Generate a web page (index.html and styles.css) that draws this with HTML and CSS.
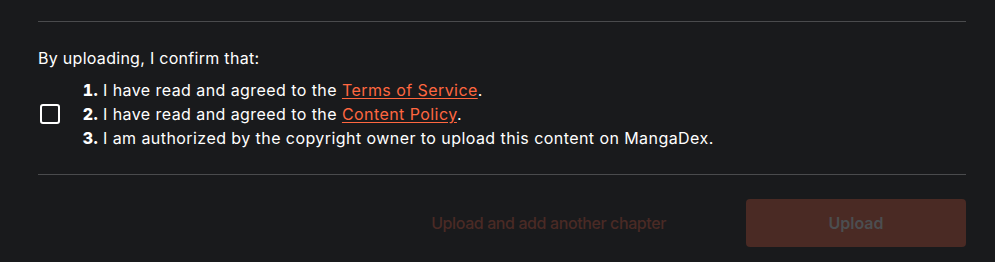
FILE: index.html
```html
<!DOCTYPE html>
<html>
<head>
<meta charset="utf-8">
<link rel="stylesheet" href="styles.css">
</head>
<body>
<div class="page">
  <hr class="divider">
  <section class="confirm">
    <p class="confirm-title">By uploading, I confirm that:</p>
    <div class="confirm-row">
      <label class="checkbox"><span class="box"></span></label>
      <ol class="terms">
        <li>I have read and agreed to the <a href="#">Terms of Service</a>.</li>
        <li>I have read and agreed to the <a href="#">Content Policy</a>.</li>
        <li>I am authorized by the copyright owner to upload this content on MangaDex.</li>
      </ol>
    </div>
  </section>
  <hr class="divider">
  <div class="actions">
    <button class="btn-text" disabled>Upload and add another chapter</button>
    <button class="btn-primary" disabled>Upload</button>
  </div>
</div>
</body>
</html>
```
FILE: styles.css
```css
html, body {
  margin: 0;
  padding: 0;
  background: #191a1c;
}
body {
  font-family: "Inter", "Noto Sans", sans-serif;
  font-size: 16px;
  line-height: 24px;
  color: #ffffff;
  letter-spacing: 0.018em;
}
.page {
  padding: 21px 29px 0 38px;
}
.divider {
  margin: 0;
  border: 0;
  height: 1px;
  background: #4a4b4d;
}
.confirm {
  padding: 24px 0;
}
.confirm-title {
  margin: 0 0 8px 0;
}
.confirm-row {
  display: flex;
  align-items: center;
}
.checkbox {
  display: flex;
  padding-left: 2px;
}
.box {
  width: 16px;
  height: 16px;
  border: 2px solid #ffffff;
  border-radius: 3px;
}
.terms {
  margin: 0;
  padding-left: 43px;
  list-style: decimal;
  letter-spacing: 0.027em;
}
.terms li::marker {
  font-weight: 800;
}
.terms a {
  color: #ff6740;
  text-decoration: underline;
  text-underline-offset: 2px;
}
.actions {
  display: flex;
  justify-content: flex-end;
  align-items: center;
  padding-top: 24px;
  gap: 40px;
}
.btn-text, .btn-primary {
  font-family: inherit;
  font-size: 16px;
  font-weight: 500;
  letter-spacing: -0.025em;
  border: 0;
  cursor: default;
}
.btn-text {
  background: transparent;
  color: #4a2a25;
  padding: 0 40px;
  height: 48px;
}
.btn-primary {
  width: 220px;
  height: 48px;
  background: #4a2a24;
  color: #4c4e50;
  font-weight: 600;
  letter-spacing: 0;
  border-radius: 4px;
}
```
